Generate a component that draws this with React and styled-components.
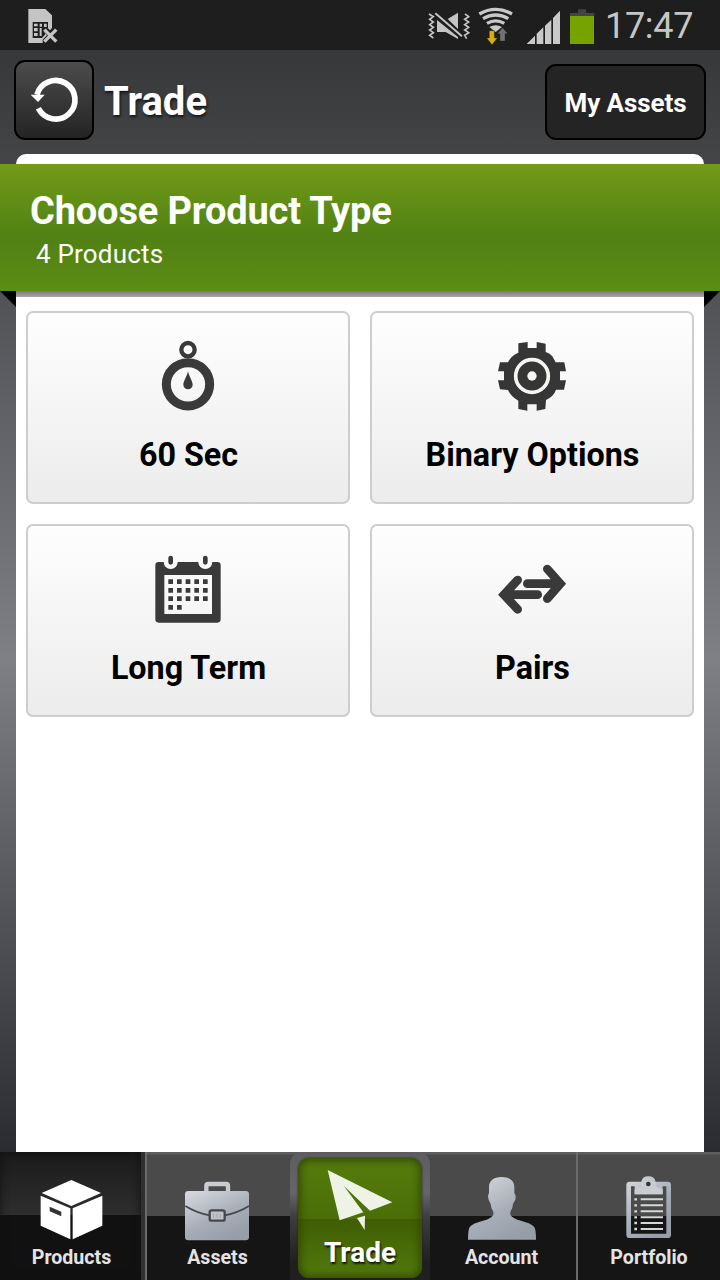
import React from 'react';
import styled, { createGlobalStyle } from 'styled-components';

const GlobalStyle = createGlobalStyle`
  * {
    box-sizing: border-box;
  }

  body {
    margin: 0;
    font-family: Roboto, "Liberation Sans", sans-serif;
  }

  svg {
    display: block;
    flex: none;
  }
`

const Screen = styled.div`
  width: 720px;
  height: 1280px;
  overflow: hidden;
  display: flex;
  flex-direction: column;
  background: linear-gradient(#37383a 50px, #434446 154px, #515256 291px, #7f8085 660px, #55565b 900px, #2b2c31 1150px);
`

const StatusBar = styled.div`
  height: 50px;
  flex: none;
  display: flex;
  align-items: center;
  padding-left: 27px;
  background: #1e1e1e;
`

const StatusIcons = styled.div`
  display: flex;
  margin-left: auto;
`

const StatusIcon = styled.svg`
  height: 50px;
  width: ${props => props.$width}px;
  margin-right: ${props => props.$gap || 0}px;
`

const Clock = styled.div`
  width: 115px;
  padding-top: 1px;
  font-size: 36px;
  line-height: 50px;
  letter-spacing: -0.3px;
  color: #c6c6c6;
`

const Header = styled.div`
  height: 104px;
  flex: none;
  display: flex;
  align-items: center;
  padding: 0 14px;
`

const RefreshButton = styled.button`
  width: 80px;
  height: 80px;
  margin-bottom: 4px;
  padding: 0;
  border: 2px solid #000;
  border-radius: 11px;
  background: linear-gradient(#4c4c4c, #242424);
`

const Title = styled.h1`
  flex: 1;
  margin: 0 0 1px 10px;
  font-size: 40px;
  line-height: 48px;
  font-weight: 700;
  color: #fff;
  text-shadow: 1px 2px 3px rgba(0, 0, 0, 0.7);
`

const AssetsButton = styled.button`
  width: 161px;
  height: 76px;
  padding: 2px 0 0;
  border: 2px solid #000;
  border-radius: 11px;
  background: #242424;
  color: #fff;
  font-family: inherit;
  font-size: 26px;
  font-weight: 700;
  letter-spacing: -0.1px;
  white-space: nowrap;
`

const PanelTop = styled.div`
  height: 10px;
  flex: none;
  margin: 0 16px;
  border-radius: 10px 10px 0 0;
  background: #fff;
`

const Banner = styled.div`
  position: relative;
  height: 127px;
  flex: none;
  padding: 24px 30px 0;
  color: #fff;
  background: linear-gradient(#739b18, #528214 55%, #528214 62%, #5c8d14);
`

const BannerTitle = styled.h2`
  margin: 0;
  font-size: 38px;
  line-height: 46px;
  font-weight: 700;
  letter-spacing: -0.16px;
`

const BannerText = styled.div`
  padding-left: 6px;
  font-size: 26px;
  line-height: 40px;
  letter-spacing: 0.2px;
`

const Fold = styled.div`
  position: absolute;
  top: 100%;
  ${props => props.$side}: 0;
  width: 16px;
  height: 16px;
  background: #000;
  clip-path: ${props => props.$side === 'left' ? 'polygon(0 0, 100% 0, 100% 100%)' : 'polygon(0 0, 100% 0, 0 100%)'};
`

const Content = styled.div`
  flex: 1;
  margin: 0 16px;
  padding: 20px 10px;
  background: linear-gradient(#7c7779, #aba6ab 6px, #fff 6px);
`

const ProductGrid = styled.div`
  display: grid;
  grid-template-columns: 1fr 1fr;
  grid-auto-rows: 193px;
  gap: 20px;
`

const ProductCard = styled.div`
  display: flex;
  flex-direction: column;
  align-items: center;
  padding-top: 23px;
  border: 2px solid #cdcdcd;
  border-radius: 7px;
  background: linear-gradient(#fefefe, #ececec);
`

const ProductName = styled.div`
  margin-top: 18px;
  padding-left: 1px;
  font-size: 32.3px;
  line-height: 42px;
  font-weight: 700;
  color: #000;
`

const NavBar = styled.div`
  height: 128px;
  flex: none;
  display: grid;
  grid-template-columns: 145px 144px 142px 145px 144px;
  background: linear-gradient(#5c5c5c 0, #5c5c5c 2px, #4a4a4a 3px, #4a4a4a 64px, #151515 64px);
`

const NavItem = styled.div`
  display: flex;
  flex-direction: column;
  align-items: center;
  padding-top: 24px;
  padding-right: ${props => props.$inset || 0}px;
  border: 0 solid #6b6b6b;
  border-left-width: ${props => props.$divider ? 2 : 0}px;
`

const ActiveNavItem = styled(NavItem)`
  border-right: 4px solid #303030;
  padding-left: 2px;
  background: linear-gradient(#1b1b1b, #2e2e2e 63px, #111 63px);
  box-shadow: inset 0 0 10px #111;
`

const NavLabel = styled.div`
  padding-top: 1px;
  font-size: 19.6px;
  line-height: 24px;
  font-weight: 700;
  color: #e4e4e4;
`

const TradeFrame = styled.div`
  margin: 0 1px;
  padding: 6px 8px 2px;
  border-radius: 12px 12px 0 0;
  background: linear-gradient(#5d5d61, #66666a 40px, #3d3d40 66px, #202020 110px);
`

const TradeButton = styled.div`
  height: 120px;
  display: flex;
  flex-direction: column;
  align-items: center;
  padding-top: 7px;
  border-radius: 11px;
  background: linear-gradient(#567c0c, #4b6e08 61px, #405d03 61px, #537a0d);
  box-shadow: inset 0 0 8px 2px #2f4602, 0 0 2px #222;
`

const TradeLabel = styled.div`
  padding-top: 1px;
  font-size: 28px;
  line-height: 32px;
  font-weight: 700;
  color: #fff;
  text-shadow: 1px 2px 2px rgba(0, 0, 0, 0.8);
`

const SimIcon = () => (
  <StatusIcon $width={32} viewBox="81 0 96 150">
    <path d="M85 27H136L156 46V84L150 91L143 84L132 95L141 106L128 119V129H85Z" fill="#c4c4c4" />
    <path d="M98 66H144V84L132 93L136 103L126 114H98Z" fill="#1e1e1e" />
    <path d="M102 71H113V79H102ZM102 84H113V94H102ZM102 99H113V108H102ZM119 71H126V80H119ZM119 84H125V108H119ZM132 71H140V81H132Z" fill="#c4c4c4" />
    <path d="M133 89L169 125M169 89L133 125" stroke="#c4c4c4" strokeWidth="10" />
  </StatusIcon>
)

const MuteIcon = () => (
  <StatusIcon $width={44} $gap={6} viewBox="51 0 132 150">
    <path d="M113 57L144 38V87Z" fill="#c4c4c4" />
    <path d="M81 60L144 111V117L107 96H81Z" fill="#c4c4c4" />
    <path d="M76 40L156 109" stroke="#1e1e1e" strokeWidth="14" />
    <path d="M76 40L156 109" stroke="#c4c4c4" strokeWidth="6" />
    <path d="M57 42L70 50L59 58L70 66L59 74L70 82L59 90L70 98L59 106L70 114M165 42L176 50L164 58L176 66L164 74L176 82L164 90L176 98L164 106L170 116" fill="none" stroke="#c4c4c4" strokeWidth="5" />
  </StatusIcon>
)

const WifiIcon = () => (
  <StatusIcon $width={37} $gap={11} viewBox="201 0 111 150">
    <g fill="none" stroke="#c9c9c9" strokeWidth="10">
      <path d="M208 42Q257 14 306 42" />
      <path d="M219 56Q257 34 295 56" />
      <path d="M231 70Q257 55 283 70" />
    </g>
    <path d="M238 81Q257 70 276 81L257 96Z" fill="#c9c9c9" />
    <path d="M238 92H253V114H262L246 134L230 114H238Z" fill="#dcae0c" stroke="#1e1e1e" strokeWidth="1" />
    <path d="M278 83L293 101H285V123H270V101H262Z" fill="#727272" stroke="#1e1e1e" strokeWidth="1" />
  </StatusIcon>
)

const SignalIcon = () => (
  <StatusIcon $width={36} $gap={8} viewBox="345 0 108 150">
    <path d="M350 132L375 107V132ZM380 101L400 82V132H380ZM405 77L424 59V132H405ZM429 54L450 32V132H429Z" fill="#c9c9c9" />
  </StatusIcon>
)

const BatteryIcon = () => (
  <StatusIcon $width={26} $gap={10} viewBox="477 0 78 150">
    <path d="M504 28H528V39H553V48H480V39H504Z" fill="#434343" />
    <path d="M480 48H552V132H480Z" fill="#76a300" />
  </StatusIcon>
)

const RefreshIcon = () => (
  <svg width="76" height="76" viewBox="48 186 228 228">
    <path d="M115 325A58 58 0 1 0 111 284" fill="none" stroke="#fff" strokeWidth="17" />
    <path d="M92 284L134 284L114 306Z" fill="#fff" />
  </svg>
)

const StopwatchIcon = () => (
  <svg width="80" height="80" viewBox="24 18 240 240">
    <circle cx="144" cy="59" r="20" fill="none" stroke="#3a3a3a" strokeWidth="13" />
    <circle cx="144" cy="163" r="65" fill="none" stroke="#3a3a3a" strokeWidth="27" />
    <path d="M144 124C147 140 158 153 158 164A14 14 0 0 1 130 164C130 153 141 140 144 124Z" fill="#3a3a3a" />
  </svg>
)

const GearIcon = () => (
  <svg width="80" height="80" viewBox="36 18 240 240">
    <path
      d="M115 40L143 36V54H170V36L197 41V66Q208 69 217 79L227 97H253L258 124H240V151H258L252 179H228Q222 198 198 210L196 237L170 242V223H142V242L115 237V212Q93 200 84 180L60 178L54 151H72V124H54L60 97H84Q92 78 115 68Z"
      fill="#363636"
    />
    <circle cx="156" cy="138" r="49" fill="none" stroke="#f6f6f2" strokeWidth="11" />
    <circle cx="156" cy="138" r="14" fill="#f6f6f2" />
  </svg>
)

const CalendarIcon = () => (
  <svg width="80" height="80" viewBox="24 12 240 240">
    <path d="M56 51H71A21 21 0 0 0 113 51H175A21 21 0 0 0 217 51H232Q242 51 242 61V223Q242 233 232 233H56Q46 233 46 223V61Q46 51 56 51ZM73 90V207H216V90Z" fill="#3a3a3a" fillRule="evenodd" />
    <path d="M92 39V52M196 39V52" stroke="#3a3a3a" strokeWidth="14" strokeLinecap="round" />
    <path d="M85 110H203M85 136H203M85 161H203M85 187H126" stroke="#3a3a3a" strokeWidth="14" strokeDasharray="14 12" />
  </svg>
)

const PairsIcon = () => (
  <svg width="80" height="80" viewBox="36 12 240 240">
    <g fill="none" stroke="#3a3a3a" strokeWidth="26" strokeLinecap="round" strokeLinejoin="miter">
      <path d="M202 72L241 116L202 161M142 116H235" />
      <path d="M113 105L72 149L113 193M173 149H80" />
    </g>
  </svg>
)

const SilverGradient = ({ id }) => (
  <linearGradient id={id} x1="0" y1="0" x2="0.6" y2="1">
    <stop offset="0" stopColor="#d8dade" />
    <stop offset="0.6" stopColor="#a9afb9" />
    <stop offset="1" stopColor="#989ea8" />
  </linearGradient>
)

const BoxIcon = () => (
  <svg width="70" height="69" viewBox="109 108 210 207">
    <path d="M212 120L301 159L212 198L123 159ZM120 167L209 205V298L120 257ZM305 167L216 205V298L305 257Z" fill="#fff" />
    <path d="M147 200L182 215V229L147 214Z" fill="#333" />
  </svg>
)

const BriefcaseIcon = () => (
  <svg width="70" height="69" viewBox="549 108 210 207">
    <SilverGradient id="briefcase" />
    <path d="M619 156V137Q619 132 625 132H678Q684 132 684 137V156" fill="none" stroke="#c9ccd0" strokeWidth="13" />
    <rect x="555" y="153" width="192" height="148" rx="10" fill="url(#briefcase)" />
    <path d="M556 198Q590 219 629 226M747 198Q713 219 674 226" fill="none" stroke="#45474b" strokeWidth="5" />
    <rect x="629" y="211" width="45" height="31" rx="6" fill="#bfc2c6" stroke="#45474b" strokeWidth="7" />
    <path d="M641 221V234M651 221V234M661 221V234" stroke="#a3a6aa" strokeWidth="3" />
  </svg>
)

const PlaneIcon = () => (
  <svg width="70" height="71" viewBox="135 75 210 213">
    <path d="M143 90L337 187L270 212L191 137L250 217L179 241Z" fill="#eff3e6" />
    <path d="M231 234L255 227L254 270Z" fill="#eff3e6" />
  </svg>
)

const PersonIcon = () => (
  <svg width="70" height="69" viewBox="111 108 210 207">
    <SilverGradient id="person" />
    <path
      d="M215 111C240 111 253 123 253 141V160Q259 166 256 179L249 192Q248 207 241 215V224Q249 236 273 242Q304 250 312 260Q318 266 318 299H114Q114 266 120 260Q128 250 159 242Q183 236 190 224V215Q183 207 182 192L176 179Q172 166 177 160V141C177 123 190 111 215 111Z"
      fill="url(#person)"
    />
  </svg>
)

const ClipboardIcon = () => (
  <svg width="70" height="69" viewBox="552 108 210 207">
    <SilverGradient id="clipboard" />
    <path
      d="M599 125H634Q637 109 655 109T677 125H713Q723 125 723 135V284Q723 294 713 294H599Q589 294 589 284V135Q589 125 599 125ZM603 139V281H709V139H698V163H614V139Z"
      fill="url(#clipboard)"
      fillRule="evenodd"
    />
    <path d="M614 163V148L634 140V125H677V140L698 148V163Z" fill="#c9ccd0" />
    <circle cx="655" cy="132" r="7" fill="#333" />
    <path d="M632 178H699M632 196H699M632 214H699M632 232H699M632 249H699M632 267H699" stroke="#d4d6d8" strokeWidth="6" />
    <path d="M613 178H621M613 196H621M613 214H621M613 232H621M613 249H621M613 267H621" stroke="#d4d6d8" strokeWidth="7" />
  </svg>
)

const products = [
  { name: '60 Sec', Icon: StopwatchIcon },
  { name: 'Binary Options', Icon: GearIcon },
  { name: 'Long Term', Icon: CalendarIcon },
  { name: 'Pairs', Icon: PairsIcon },
]

const App = () => {
  return (
    <Screen>
      <GlobalStyle />
      <StatusBar>
        <SimIcon />
        <StatusIcons>
          <MuteIcon />
          <WifiIcon />
          <SignalIcon />
          <BatteryIcon />
          <Clock>17:47</Clock>
        </StatusIcons>
      </StatusBar>
      <Header>
        <RefreshButton aria-label="Refresh"><RefreshIcon /></RefreshButton>
        <Title>Trade</Title>
        <AssetsButton>My Assets</AssetsButton>
      </Header>
      <PanelTop />
      <Banner>
        <BannerTitle>Choose Product Type</BannerTitle>
        <BannerText>{`${products.length} Products`}</BannerText>
        <Fold $side="left" />
        <Fold $side="right" />
      </Banner>
      <Content>
        <ProductGrid>
          {products.map(({ name, Icon }) => (
            <ProductCard key={name}>
              <Icon />
              <ProductName>{name}</ProductName>
            </ProductCard>
          ))}
        </ProductGrid>
      </Content>
      <NavBar>
        <ActiveNavItem>
          <BoxIcon />
          <NavLabel>Products</NavLabel>
        </ActiveNavItem>
        <NavItem $divider $inset={1}>
          <BriefcaseIcon />
          <NavLabel>Assets</NavLabel>
        </NavItem>
        <TradeFrame>
          <TradeButton>
            <PlaneIcon />
            <TradeLabel>Trade</TradeLabel>
          </TradeButton>
        </TradeFrame>
        <NavItem $inset={4}>
          <PersonIcon />
          <NavLabel>Account</NavLabel>
        </NavItem>
        <NavItem $divider>
          <ClipboardIcon />
          <NavLabel>Portfolio</NavLabel>
        </NavItem>
      </NavBar>
    </Screen>
  )
}

export default App;
